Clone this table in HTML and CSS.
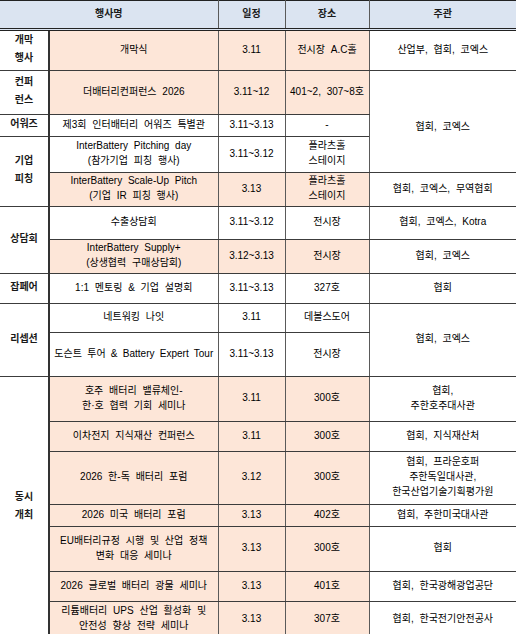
FILE: index.html
```html
<!DOCTYPE html>
<html lang="ko">
<head>
<meta charset="utf-8">
<title>행사 일정</title>
<link rel="stylesheet" href="styles.css">
</head>
<body>
<table class="schedule">
  <colgroup>
    <col class="c-cat"><col class="c-name"><col class="c-date"><col class="c-place"><col class="c-host">
  </colgroup>
  <thead>
    <tr class="head">
      <th colspan="2">행사명</th><th>일정</th><th>장소</th><th>주관</th>
    </tr>
  </thead>
  <tbody>
    <tr class="r1">
      <th class="cat">개막<br>행사</th>
      <td class="pk">개막식</td><td class="pk">3.11</td><td class="pk">전시장 A.C홀</td>
      <td>산업부, 협회, 코엑스</td>
    </tr>
    <tr class="r2">
      <th class="cat">컨퍼<br>런스</th>
      <td class="pk">더배터리컨퍼런스 2026</td><td class="pk">3.11~12</td><td class="pk">401~2, 307~8호</td>
      <td class="low" rowspan="3">협회, 코엑스</td>
    </tr>
    <tr class="r3">
      <th class="cat">어워즈</th>
      <td>제3회 인터배터리 어워즈 특별관</td><td>3.11~3.13</td><td>-</td>
    </tr>
    <tr class="r4">
      <th class="cat" rowspan="2">기업<br>피칭</th>
      <td class="two">InterBattery Pitching day<br>(참가기업 피칭 행사)</td><td>3.11~3.12</td><td class="two">플라츠홀<br>스테이지</td>
    </tr>
    <tr class="r5">
      <td class="pk two">InterBattery Scale-Up Pitch<br>(기업 IR 피칭 행사)</td><td class="pk">3.13</td><td class="pk two">플라츠홀<br>스테이지</td>
      <td class="soft">협회, 코엑스, 무역협회</td>
    </tr>
    <tr class="r6">
      <th class="cat" rowspan="2">상담회</th>
      <td>수출상담회</td><td>3.11~3.12</td><td>전시장</td>
      <td>협회, 코엑스, Kotra</td>
    </tr>
    <tr class="r7">
      <td class="pk two">InterBattery Supply+<br>(상생협력 구매상담회)</td><td class="pk">3.12~3.13</td><td class="pk">전시장</td>
      <td>협회, 코엑스</td>
    </tr>
    <tr class="r8">
      <th class="cat">잡페어</th>
      <td>1:1 멘토링 &amp; 기업 설명회</td><td>3.11~3.13</td><td>327호</td>
      <td>협회</td>
    </tr>
    <tr class="r9">
      <th class="cat" rowspan="2">리셉션</th>
      <td>네트워킹 나잇</td><td>3.11</td><td>데볼스도어</td>
      <td rowspan="2">협회, 코엑스</td>
    </tr>
    <tr class="r10">
      <td class="tight">도슨트 투어 &amp; Battery Expert Tour</td><td>3.11~3.13</td><td>전시장</td>
    </tr>
    <tr class="r11">
      <th class="cat" rowspan="7">동시<br>개최</th>
      <td class="pk two">호주 배터리 밸류체인-<br>한·호 협력 기회 세미나</td><td class="pk">3.11</td><td class="pk">300호</td>
      <td class="two">협회,<br>주한호주대사관</td>
    </tr>
    <tr class="r12">
      <td class="pk">이차전지 지식재산 컨퍼런스</td><td class="pk">3.11</td><td class="pk">300호</td>
      <td>협회, 지식재산처</td>
    </tr>
    <tr class="r13">
      <td class="pk">2026 한-독 배터리 포럼</td><td class="pk">3.12</td><td class="pk">300호</td>
      <td class="three">협회, 프라운호퍼<br>주한독일대사관,<br>한국산업기술기획평가원</td>
    </tr>
    <tr class="r14">
      <td class="pk">2026 미국 배터리 포럼</td><td class="pk">3.13</td><td class="pk">402호</td>
      <td>협회, 주한미국대사관</td>
    </tr>
    <tr class="r15">
      <td class="pk two">EU배터리규정 시행 및 산업 정책<br>변화 대응 세미나</td><td class="pk">3.13</td><td class="pk">300호</td>
      <td>협회</td>
    </tr>
    <tr class="r16">
      <td class="pk">2026 글로벌 배터리 광물 세미나</td><td class="pk">3.13</td><td class="pk">401호</td>
      <td>협회, 한국광해광업공단</td>
    </tr>
    <tr class="r17">
      <td class="pk two">리튬배터리 UPS 산업 활성화 및<br>안전성 향상 전략 세미나</td><td class="pk">3.13</td><td class="pk">307호</td>
      <td>협회, 한국전기안전공사</td>
    </tr>
  </tbody>
</table>
</body>
</html>
```

FILE: styles.css
```css
html, body {
  margin: 0;
  padding: 0;
  background: #ffffff;
  overflow: hidden;
}

.schedule {
  width: 516px;
  table-layout: fixed;
  border-collapse: collapse;
  font-family: "Liberation Sans", "Noto Sans CJK KR", sans-serif;
  font-size: 10px;
  color: #000;
  word-spacing: 3px;
}

.c-cat { width: 49px; }
.c-name { width: 169px; }
.c-date { width: 67px; }
.c-place { width: 84px; }
.c-host { width: 147px; }

.schedule th,
.schedule td {
  padding: 0 2px 3px;
  text-align: center;
  vertical-align: middle;
  white-space: nowrap;
  line-height: 15px;
  border-top: 1px solid #3c3c3c;
  border-bottom: 1px solid #3c3c3c;
  border-left: 1px solid #5a5a5a;
  border-right: 1px solid #5a5a5a;
}

.schedule td:last-child { border-right: none; }

.head th {
  height: 25px;
  background: #dbe4f1;
  font-weight: bold;
  color: #1a1a1a;
  border-top: 1px solid #222;
  border-bottom: 3px double #222;
  border-left: 1px solid #6a6a6a;
  padding: 0 2px 2px;
}
.head th:first-child { border-left: none; }
.head th:last-child { border-right: none; }

.schedule .cat {
  font-weight: bold;
  color: #1a1a1a;
  line-height: 18px;
  border-left: none;
  border-right: 2px solid #333;
  padding: 0 0 3px;
}

.pk { background: #fde6d8; }
.soft { border-top-color: #8a8a8a; }
.two { line-height: 15px; }
.three { line-height: 13px; }
.schedule .tight { padding-left: 0; padding-right: 0; word-spacing: 2.5px; }
.schedule .low { padding-top: 12px; }

.r1 { height: 41px; }
.r2 { height: 44px; }
.r3 { height: 22px; }
.r4 { height: 36px; }
.r5 { height: 34px; }
.r6 { height: 33px; }
.r7 { height: 34px; }
.r8 { height: 30px; }
.r9 { height: 29px; }
.r10 { height: 44px; }
.r11 { height: 45px; }
.r12 { height: 30px; }
.r13 { height: 53px; }
.r14 { height: 22px; }
.r15 { height: 45px; }
.r16 { height: 30px; }
.r17 { height: 36px; }
```
